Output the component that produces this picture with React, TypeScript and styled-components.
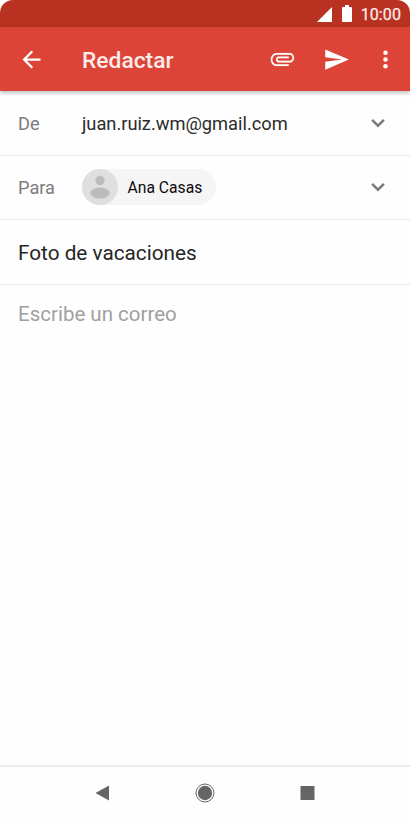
import styled, { createGlobalStyle } from 'styled-components';

const GlobalStyle = createGlobalStyle`
  * {
    box-sizing: border-box;
  }

  body {
    margin: 0;
    background: #ffffff;
    font-family: Roboto, 'Liberation Sans', sans-serif;
  }
`;

const Screen = styled.div`
  display: flex;
  flex-direction: column;
  width: 410px;
  height: 820px;
  background: #fefefe;
  overflow: hidden;
`;

const StatusBar = styled.div`
  display: flex;
  align-items: center;
  justify-content: flex-end;
  height: 27px;
  padding: 0 9px 0 0;
  background: #b93221;
  border-radius: 13px 13px 0 0;
  color: #fdeae7;
`;

const Clock = styled.span`
  margin-left: 9px;
  padding-top: 3px;
  font-size: 16px;
  line-height: 26px;
  letter-spacing: 0.1px;
  -webkit-text-stroke: 0.25px currentColor;
`;

const SignalIcon = styled.svg`
  display: block;
  width: 15px;
  height: 15px;
  margin: 2px 10px 0 0;
`;

const BatteryIcon = styled.svg`
  display: block;
  width: 10px;
  height: 17px;
`;

const AppBar = styled.header`
  display: flex;
  align-items: center;
  flex: none;
  height: 64px;
  padding: 1px 11.5px 0 18px;
  background: #dc4437;
  color: #ffffff;
  box-shadow: 0 2px 4px rgba(0, 0, 0, 0.26);
  z-index: 1;
`;

const Title = styled.h1`
  flex: 1;
  margin: 0 0 0 37px;
  padding-top: 2px;
  font-size: 22.8px;
  font-weight: 500;
  line-height: 28px;
  color: #fdecea;
`;

const IconButton = styled.button<{ $gap?: number }>`
  display: flex;
  padding: 0;
  margin-left: ${({ $gap = 0 }) => $gap}px;
  border: none;
  background: none;
  color: inherit;
  cursor: pointer;

  svg {
    display: block;
    width: 27px;
    height: 27px;
    fill: currentColor;
  }
`;

const Row = styled.div`
  display: flex;
  align-items: center;
  flex: none;
  height: 64px;
  padding: 0 18px;
  border-bottom: 1px solid #e9e9e9;
`;

const FromRow = styled(Row)`
  height: 65px;
`;

const ToRow = styled(Row)`
  padding-bottom: 2px;
`;

const SubjectRow = styled(Row)`
  height: 65px;
  padding-top: 1px;
`;

const Label = styled.span`
  width: 64px;
  padding-top: 2px;
  font-size: 18.2px;
  line-height: 24px;
  color: #7c7c7c;
`;

const Sender = styled.span`
  padding-top: 1px;
  font-size: 18.3px;
  line-height: 24px;
  letter-spacing: -0.02px;
  color: #2b2b2b;
`;

const Chip = styled.div`
  display: flex;
  align-items: center;
  height: 36px;
  padding-right: 14px;
  border-radius: 18px;
  background: #f5f5f5;
  font-size: 15.7px;
  color: #0c0c0c;
`;

const ChipName = styled.span`
  padding-top: 2px;
`;

const Avatar = styled.svg`
  display: block;
  width: 36px;
  height: 36px;
  margin-right: 9.5px;
`;

const Expand = styled.svg`
  display: block;
  width: 26px;
  height: 26px;
  margin-left: auto;
  margin-right: 1px;
  fill: #777777;
  stroke: #777777;
  stroke-width: 0.4;
`;

const Subject = styled.span`
  font-size: 20.75px;
  line-height: 26px;
  color: #252525;
`;

const Body = styled.main`
  flex: 1;
  padding: 16px 18px;
  font-size: 20.5px;
  line-height: 26px;
  color: #a0a0a0;
`;

const NavBar = styled.nav`
  display: flex;
  justify-content: space-between;
  align-items: center;
  flex: none;
  height: 55px;
  padding: 0 92px 2px;
  border-top: 2px solid #ebebeb;

  svg {
    display: block;
    width: 22px;
    height: 22px;
    fill: #656565;
  }
`;

const ExpandIcon = () => (
  <Expand viewBox="0 0 24 24">
    <path d="M16.59 8.59 12 13.17 7.41 8.59 6 10l6 6 6-6z" />
  </Expand>
);

export default function App() {
  return (
    <>
      <GlobalStyle />
      <Screen>
        <StatusBar>
          <SignalIcon viewBox="0 0 16 16">
            <path d="M16 0v16H0z" fill="#fff" />
          </SignalIcon>
          <BatteryIcon viewBox="0 0 10 17">
            <path
              d="M3 0h4v2h2a1 1 0 0 1 1 1v13a1 1 0 0 1-1 1H1a1 1 0 0 1-1-1V3a1 1 0 0 1 1-1h2z"
              fill="#fff"
            />
          </BatteryIcon>
          <Clock>10:00</Clock>
        </StatusBar>

        <AppBar>
          <IconButton aria-label="Atrás">
            <svg viewBox="0 0 24 24">
              <path d="M20 11H7.83l5.59-5.59L12 4l-8 8 8 8 1.41-1.41L7.83 13H20v-2z" />
            </svg>
          </IconButton>
          <Title>Redactar</Title>
          <IconButton aria-label="Adjuntar">
            <svg viewBox="0 0 24 24">
              <path
                transform="translate(23.2 -1.2) scale(.94 1.06) rotate(90)"
                stroke="currentColor"
                strokeWidth="0.1"
                d="M16.5 6v11.5c0 2.21-1.79 4-4 4s-4-1.79-4-4V5a2.5 2.5 0 0 1 5 0v10.5c0 .55-.45 1-1 1s-1-.45-1-1V6H10v9.5a2.5 2.5 0 0 0 5 0V5c0-2.21-1.79-4-4-4S7 2.79 7 5v12.5c0 3.04 2.46 5.5 5.5 5.5s5.5-2.46 5.5-5.5V6h-1.5z"
              />
            </svg>
          </IconButton>
          <IconButton $gap={27} aria-label="Enviar">
            <svg viewBox="0 0 24 24">
              <path d="M2.01 21 23 12 2.01 3 2 10l15 2-15 2z" />
            </svg>
          </IconButton>
          <IconButton $gap={21.5} aria-label="Más opciones">
            <svg viewBox="0 0 24 24">
              <circle cx="12" cy="6" r="2" />
              <circle cx="12" cy="12" r="2" />
              <circle cx="12" cy="18" r="2" />
            </svg>
          </IconButton>
        </AppBar>

        <FromRow>
          <Label>De</Label>
          <Sender>juan.ruiz.wm@gmail.com</Sender>
          <ExpandIcon />
        </FromRow>
        <ToRow>
          <Label>Para</Label>
          <Chip>
            <Avatar viewBox="0 0 36 36">
              <circle cx="18" cy="18" r="18" fill="#dfdfdf" />
              <circle cx="18" cy="11.5" r="4.7" fill="#bcbcbc" />
              <ellipse cx="18" cy="24" rx="9.7" ry="5.5" fill="#bcbcbc" />
            </Avatar>
            <ChipName>Ana Casas</ChipName>
          </Chip>
          <ExpandIcon />
        </ToRow>
        <SubjectRow>
          <Subject>Foto de vacaciones</Subject>
        </SubjectRow>
        <Body>Escribe un correo</Body>

        <NavBar>
          <svg viewBox="0 0 22 22">
            <path d="M17 3.5v15L3.5 11z" />
          </svg>
          <svg viewBox="0 0 22 22">
            <circle cx="11" cy="11" r="7.2" />
            <circle cx="11" cy="11" r="9" fill="none" stroke="#656565" strokeWidth="1" />
          </svg>
          <svg viewBox="0 0 22 22">
            <path d="M4.5 4h14v14h-14z" />
          </svg>
        </NavBar>
      </Screen>
    </>
  );
}
